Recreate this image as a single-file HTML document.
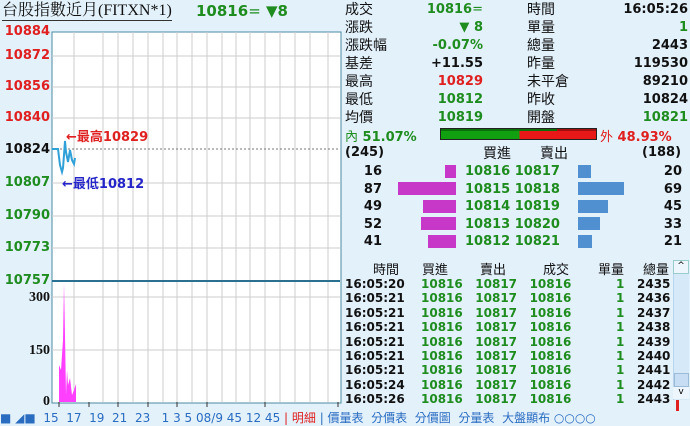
<!DOCTYPE html>
<html><head><meta charset="utf-8"><style>
*{margin:0;padding:0;box-sizing:border-box}
body{width:690px;height:417px;overflow:hidden;background:#e3f1fb;font-family:"DejaVu Sans","Noto Sans CJK TC",sans-serif;position:relative}
.a{position:absolute;white-space:nowrap}
.b{font-weight:bold;font-size:13px}
.g{color:#1e8c1e}.r{color:#e02020}.k{color:#111}.bl{color:#2424c8}
.l{font-size:14px;color:#111;font-family:"Noto Sans CJK TC",sans-serif;line-height:18px}
.R{text-align:right}
</style></head><body>
<div class="a" style="left:2px;top:1px;font-size:16px;font-family:'Liberation Serif','Noto Serif CJK SC',serif;color:#111;border-bottom:1px solid #333;line-height:19px">台股指數近月(FITXN*1)</div>
<div class="a b g" style="left:196px;top:2px;font-size:15px">10816<span style="font-weight:normal">=</span> ▼8</div>
<svg class="a" style="left:0;top:0" width="345" height="417">
<rect x="52" y="32" width="289" height="371" fill="#fff" stroke="#4a8aa0"/>
<g stroke="#ccc" stroke-width="1">
<line x1="74" y1="32" x2="74" y2="402"/><line x1="103" y1="32" x2="103" y2="402"/><line x1="118" y1="32" x2="118" y2="402"/><line x1="133" y1="32" x2="133" y2="402"/><line x1="148" y1="32" x2="148" y2="402"/><line x1="163" y1="32" x2="163" y2="402"/><line x1="177" y1="32" x2="177" y2="402"/><line x1="192" y1="32" x2="192" y2="402"/><line x1="207" y1="32" x2="207" y2="402"/><line x1="222" y1="32" x2="222" y2="402"/><line x1="236" y1="32" x2="236" y2="402"/><line x1="250" y1="32" x2="250" y2="402"/><line x1="265" y1="32" x2="265" y2="402"/><line x1="280" y1="32" x2="280" y2="402"/><line x1="295" y1="32" x2="295" y2="402"/><line x1="310" y1="32" x2="310" y2="402"/><line x1="328" y1="32" x2="328" y2="402"/>
<line x1="52" y1="56" x2="340" y2="56"/><line x1="52" y1="87" x2="340" y2="87"/><line x1="52" y1="118" x2="340" y2="118"/><line x1="52" y1="183" x2="340" y2="183"/><line x1="52" y1="216" x2="340" y2="216"/><line x1="52" y1="248" x2="340" y2="248"/><line x1="52" y1="297" x2="340" y2="297"/><line x1="52" y1="350" x2="340" y2="350"/>
</g>
<line x1="52" y1="149" x2="340" y2="149" stroke="#777" stroke-dasharray="2,2"/>
<line x1="52" y1="281" x2="340" y2="281" stroke="#2a7090" stroke-width="2"/>
<polyline points="52,149 58,149 60,165 62,172 63,168 64,155 65,141 66,152 68,162 70,150 72,160 74,164 75,158" fill="none" stroke="#30a0d8" stroke-width="2"/>
<polygon points="59,402 59,365 61,370 63,340 64,283 65,335 66,395 67,370 68,385 70,378 72,395 74,390 76,384 76,402" fill="#ff40ff"/>
<g stroke="#333"><line x1="59" y1="402" x2="59" y2="407"/><line x1="89" y1="402" x2="89" y2="407"/><line x1="118" y1="402" x2="118" y2="407"/><line x1="148" y1="402" x2="148" y2="407"/><line x1="177" y1="402" x2="177" y2="407"/><line x1="207" y1="402" x2="207" y2="407"/><line x1="265" y1="402" x2="265" y2="407"/><line x1="338" y1="402" x2="338" y2="407"/></g>
</svg>
<div class="a b r R" style="left:0;width:50px;top:24px">10884</div>
<div class="a b r R" style="left:0;width:50px;top:48px">10872</div>
<div class="a b r R" style="left:0;width:50px;top:79px">10856</div>
<div class="a b r R" style="left:0;width:50px;top:110px">10840</div>
<div class="a b k R" style="left:0;width:50px;top:142px">10824</div>
<div class="a b g R" style="left:0;width:50px;top:175px">10807</div>
<div class="a b g R" style="left:0;width:50px;top:208px">10790</div>
<div class="a b g R" style="left:0;width:50px;top:240px">10773</div>
<div class="a b g R" style="left:0;width:50px;top:273px">10757</div>
<div class="a b k R" style="left:0;width:50px;top:290px;font-family:'Liberation Serif',serif;font-size:14px">300</div>
<div class="a b k R" style="left:0;width:50px;top:343px;font-family:'Liberation Serif',serif;font-size:14px">150</div>
<div class="a b k R" style="left:0;width:50px;top:394px;font-family:'Liberation Serif',serif;font-size:14px">0</div>
<div class="a b r" style="left:66px;top:126px">←最高10829</div>
<div class="a b bl" style="left:62px;top:173px">←最低10812</div>
<div class="a" style="left:0;top:409px;font-size:12px;color:#2a6cc0">■ ◢■ &nbsp;15 &nbsp;17 &nbsp;19 &nbsp;21 &nbsp;23 &nbsp; 1 3 5 08/9 45 12 45 <span style="color:#e02020">| 明細</span> | 價量表 &nbsp;分價表 &nbsp;分價圖 &nbsp;分量表 &nbsp;大盤顯布 ○○○○</div>

<div class="a l" style="left:345px;top:0">成交<br>漲跌<br>漲跌幅<br>基差<br>最高<br>最低<br>均價</div>
<div class="a b R" style="left:400px;width:83px;top:1px;line-height:18px"><span class="g">10816<span style="font-weight:normal">=</span></span><br><span class="g">▼ 8</span><br><span class="g">-0.07%</span><br><span class="k">+11.55</span><br><span class="r">10829</span><br><span class="g">10812</span><br><span class="g">10819</span></div>
<div class="a l" style="left:527px;top:0">時間<br>單量<br>總量<br>昨量<br>未平倉<br>昨收<br>開盤</div>
<div class="a b R" style="left:590px;width:98px;top:1px;line-height:18px"><span class="k">16:05:26</span><br><span class="g">1</span><br><span class="k">2443</span><br><span class="k">119530</span><br><span class="k">89210</span><br><span class="k">10824</span><br><span class="g">10821</span></div>
<div class="a b g" style="left:345px;top:126px"><span style="font-weight:normal;font-family:'Noto Sans CJK TC'">內</span> 51.07%</div>
<div class="a" style="left:440px;top:128px;width:157px;height:12px;border:1px solid #222;background:linear-gradient(90deg,#10a010 0 50.5%,#e81818 50.5%)"><div style="position:absolute;left:0;top:0;width:100%;height:2px;background:linear-gradient(90deg,#0a700a 0 75%,#a01010 75%)"></div></div>
<div class="a b r" style="left:600px;top:126px"><span style="font-weight:normal;font-family:'Noto Sans CJK TC'">外</span> 48.93%</div>
<div class="a b k" style="left:345px;top:145px">(245)</div>
<div class="a l" style="left:483px;top:144px">買進</div><div class="a l" style="left:540px;top:144px">賣出</div>
<div class="a b k" style="left:642px;top:145px">(188)</div>
<div class="a b k R" style="left:345px;width:37px;top:163px;line-height:17.5px">16<br>87<br>49<br>52<br>41</div>
<div class="a" style="left:445px;top:165px;width:11px;height:13px;background:#c838c8"></div>
<div class="a" style="left:398px;top:182px;width:58px;height:13px;background:#c838c8"></div>
<div class="a" style="left:423px;top:200px;width:33px;height:13px;background:#c838c8"></div>
<div class="a" style="left:421px;top:217px;width:35px;height:13px;background:#c838c8"></div>
<div class="a" style="left:428px;top:235px;width:28px;height:13px;background:#c838c8"></div>
<div class="a b g" style="left:465px;top:163px;line-height:17.5px">10816 10817<br>10815 10818<br>10814 10819<br>10813 10820<br>10812 10821</div>
<div class="a" style="left:578px;top:165px;width:13px;height:13px;background:#5090d0"></div>
<div class="a" style="left:578px;top:182px;width:46px;height:13px;background:#5090d0"></div>
<div class="a" style="left:578px;top:200px;width:30px;height:13px;background:#5090d0"></div>
<div class="a" style="left:578px;top:217px;width:22px;height:13px;background:#5090d0"></div>
<div class="a" style="left:578px;top:235px;width:14px;height:13px;background:#5090d0"></div>
<div class="a b k R" style="left:640px;width:42px;top:163px;line-height:17.5px">20<br>69<br>45<br>33<br>21</div>
<div class="a l" style="left:373px;top:260px;font-size:13px">時間</div>
<div class="a l" style="left:422px;top:260px;font-size:13px">買進</div>
<div class="a l" style="left:480px;top:260px;font-size:13px">賣出</div>
<div class="a l" style="left:543px;top:260px;font-size:13px">成交</div>
<div class="a l" style="left:598px;top:260px;font-size:13px">單量</div>
<div class="a l" style="left:643px;top:260px;font-size:13px">總量</div>
<div class="a b" style="left:345px;top:277px;line-height:14.4px;font-family:'DejaVu Sans';font-size:12px">
<pre class="k" style="font:inherit;position:absolute;left:0">16:05:20
16:05:21
16:05:21
16:05:21
16:05:21
16:05:21
16:05:21
16:05:24
16:05:26</pre>
<pre class="g" style="font:inherit;position:absolute;left:76px">10816   10817   10816
10816   10817   10816
10816   10817   10816
10816   10817   10816
10816   10817   10816
10816   10817   10816
10816   10817   10816
10816   10817   10816
10816   10817   10816</pre>
<pre class="g" style="font:inherit;position:absolute;left:271px">1
1
1
1
1
1
1
1
1</pre>
<pre class="k" style="font:inherit;position:absolute;left:292px">2435
2436
2437
2438
2439
2440
2441
2442
2443</pre>
</div>
<div class="a" style="left:673px;top:260px;width:16px;height:140px;background:#d6e9f8;border-left:1px solid #b8d4ec"></div>
<div class="a" style="left:673px;top:260px;width:16px;height:14px;background:#eef6fd;border:1px solid #9cc;font-size:9px;text-align:center">^</div>
<div class="a" style="left:674px;top:373px;width:15px;height:14px;background:#c6ddf3;border:1px solid #9bbbd8"></div>
<div class="a" style="left:673px;top:387px;width:16px;height:12px;background:#eef6fd;font-size:9px;text-align:center">v</div>
<div class="a" style="left:676px;top:400px;width:3px;height:11px;background:#e02020"></div>
</body></html>
